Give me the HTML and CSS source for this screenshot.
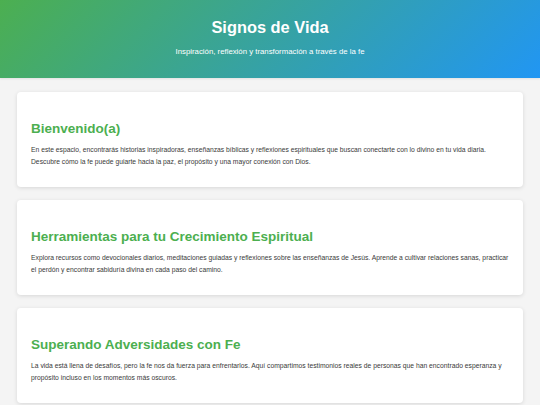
FILE: index.html
```html
<!DOCTYPE html>
<html lang="es">
<head>
<meta charset="utf-8">
<title>Signos de Vida</title>
<link rel="stylesheet" href="styles.css">
</head>
<body>
<header class="hero">
  <h1 class="hero-title">Signos de Vida</h1>
  <p class="hero-sub">Inspiración, reflexión y transformación a través de la fe</p>
</header>
<main class="content">
  <section class="card">
    <h2 class="card-title">Bienvenido(a)</h2>
    <p class="card-text">En este espacio, encontrarás historias inspiradoras, enseñanzas bíblicas y reflexiones espirituales que buscan conectarte con lo divino en tu vida diaria. Descubre cómo la fe puede guiarte hacia la paz, el propósito y una mayor conexión con Dios.</p>
  </section>
  <section class="card">
    <h2 class="card-title">Herramientas para tu Crecimiento Espiritual</h2>
    <p class="card-text">Explora recursos como devocionales diarios, meditaciones guiadas y reflexiones sobre las enseñanzas de Jesús. Aprende a cultivar relaciones sanas, practicar el perdón y encontrar sabiduría divina en cada paso del camino.</p>
  </section>
  <section class="card">
    <h2 class="card-title">Superando Adversidades con Fe</h2>
    <p class="card-text">La vida está llena de desafíos, pero la fe nos da fuerza para enfrentarlos. Aquí compartimos testimonios reales de personas que han encontrado esperanza y propósito incluso en los momentos más oscuros.</p>
  </section>
</main>
</body>
</html>
```
FILE: styles.css
```css
* { box-sizing: border-box; }
html, body { margin: 0; padding: 0; }
body {
  background: #f4f4f4;
  font-family: "Liberation Sans", Arial, sans-serif;
  color: #333;
}
.hero {
  height: 78px;
  background: linear-gradient(135deg, #4caf50 0%, #2196f3 100%);
  color: #fff;
  text-align: center;
  padding-top: 17px;
  box-shadow: 0 1px 2px rgba(0,0,0,0.08);
}
.hero-title {
  margin: 0;
  font-size: 16.4px;
  font-weight: bold;
  line-height: 20px;
}
.hero-sub {
  margin: 10px 0 0;
  font-size: 7.8px;
  line-height: 10px;
}
.content {
  padding: 14px 17px 20px;
  display: flex;
  flex-direction: column;
  gap: 13px;
}
.card {
  background: #fff;
  border-radius: 4px;
  box-shadow: 0 1px 4px rgba(0,0,0,0.12);
  padding: 29px 14px 19px;
}
.card-title {
  margin: 0 0 7px;
  color: #4caf50;
  font-size: 13.5px;
  font-weight: bold;
  line-height: 16px;
}
.card-text {
  margin: 0;
  font-size: 6.75px;
  line-height: 12px;
  color: #3a3a3a;
}
```
